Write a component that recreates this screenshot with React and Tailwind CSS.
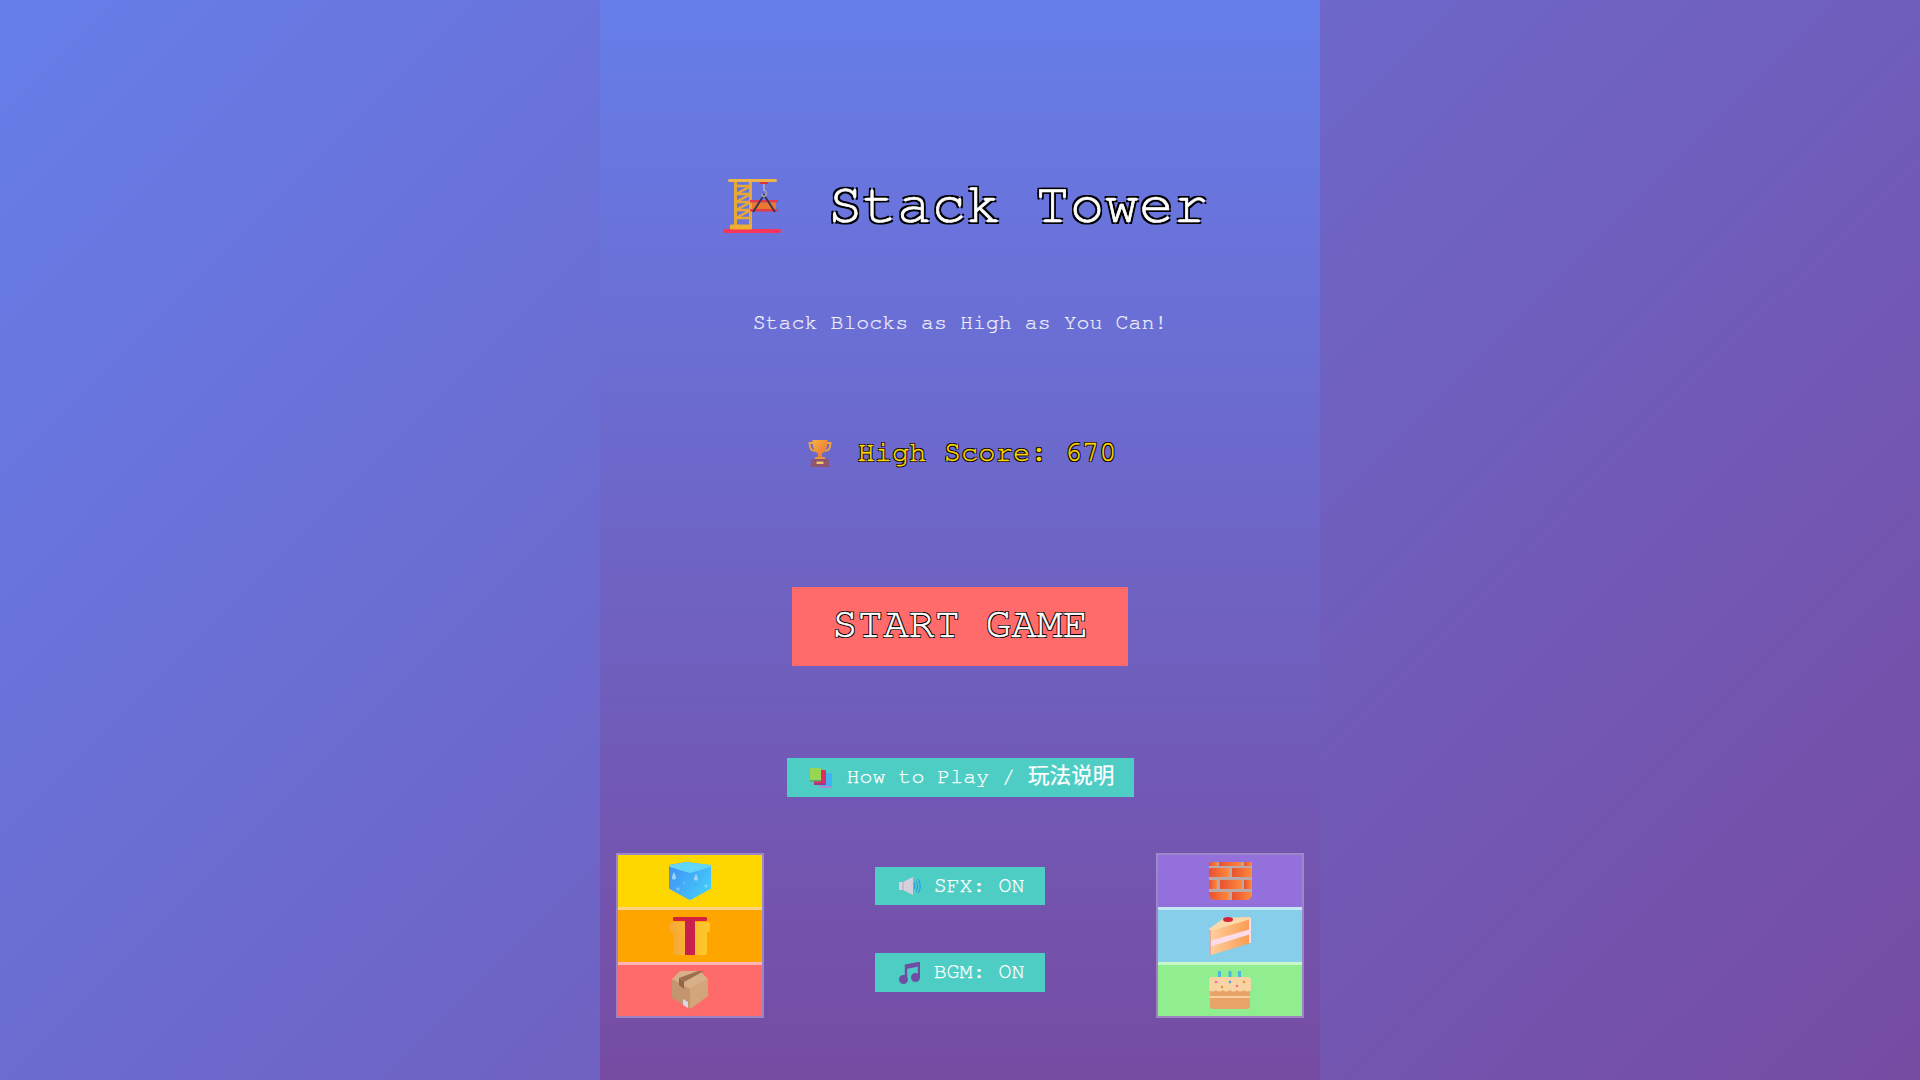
const Crane = () => (
  <svg width="58" height="54" viewBox="0 0 58 54" className="shrink-0">
    <rect x="0" y="50" width="58" height="4" rx="2" fill="#f5355b" />
    <rect x="7" y="45.500" width="22" height="5" rx="1" fill="#eeb02e" />
    <rect x="11" y="3" width="3" height="43" fill="#e8a838" />
    <rect x="26" y="3" width="3" height="43" fill="#e8a838" />
    <path d="M12 7h16L13 15l15 0L13 23l15 0L13 31l15 0L13 39l15 0" fill="none" stroke="#e8a838" strokeWidth="2.400" />
    <rect x="5" y="0" width="49" height="3" rx="1.500" fill="#eeb44a" />
    <rect x="37" y="3" width="8" height="2" fill="#d8333f" />
    <path d="M41 5v7" stroke="#b7b0c0" strokeWidth="1.500" />
    <rect x="27" y="21" width="28" height="2.500" fill="#e8394a" />
    <rect x="29" y="23.500" width="24" height="7" fill="#e8792f" />
    <rect x="27" y="30" width="28" height="2.500" fill="#e8394a" />
    <path d="M30 33l11-17 11 17" fill="none" stroke="#3a3550" strokeWidth="2" />
    <path d="M41 11c3 1 3 5 1 6s-3 0-3-2" fill="none" stroke="#a9a3b3" strokeWidth="1.500" />
  </svg>
);

const Trophy = () => (
  <svg width="24" height="27" viewBox="0 0 24 27" className="shrink-0">
    <defs>
      <linearGradient id="cupFill" x1="0" y1="0" x2="1" y2="1">
        <stop offset="0" stopColor="#f6b23c" />
        <stop offset="1" stopColor="#e8703a" />
      </linearGradient>
    </defs>
    <path d="M5 3H1.500c0 5 2 8 6 8M19 3h3.500c0 5-2 8-6 8" fill="none" stroke="#f0a53a" strokeWidth="1.800" />
    <path d="M4.500 0h15c0 8-2 11.500-5.500 13.500V17h-4v-3.500C6.500 11.500 4.500 8 4.500 0z" fill="url(#cupFill)" />
    <path d="M7.500 17h9l1 2.500h-11z" fill="#e89a3a" />
    <path d="M3.500 19h17l1 8h-19z" fill="#8f5570" />
    <rect x="8.500" y="21.500" width="7" height="2.500" rx="0.500" fill="#eec36a" />
  </svg>
);

const Books = () => (
  <svg width="22" height="20" viewBox="0 0 22 20" className="shrink-0">
    <rect x="10" y="5" width="12" height="14" rx="1" fill="#3fb4f5" />
    <rect x="10" y="18" width="12" height="2" fill="#b08ad0" />
    <rect x="4" y="2" width="12" height="15" rx="1" fill="#e02d5f" />
    <rect x="4" y="15" width="11" height="2" fill="#a03a80" />
    <rect x="0" y="0" width="11" height="13" rx="0.500" fill="#96d652" />
    <rect x="0" y="12" width="11" height="1.500" fill="#5fa070" />
  </svg>
);

const Speaker = () => (
  <svg width="22" height="18" viewBox="0 0 22 18" className="shrink-0">
    <path d="M0 5h4l10-5v18L4 13H0z" fill="#d6d0dc" />
    <rect x="3.500" y="5" width="1.500" height="8" fill="#bdb6c4" />
    <path d="M15 6c1.300 2 1.300 4 0 6M17 4c2 3 2 7 0 10M19 2c3 4 3 10 0 14" fill="none" stroke="#2f9ce8" strokeWidth="1.200" />
  </svg>
);

const Note = () => (
  <svg width="21" height="22" viewBox="0 0 21 22" className="shrink-0">
    <path d="M7 18V3.500L20 1v15" fill="none" stroke="#6f4fa3" strokeWidth="2.400" />
    <path d="M7 3L20 0.500v4L7 7z" fill="#6f4fa3" />
    <circle cx="4.500" cy="17.500" r="4.500" fill="#6f4fa3" />
    <circle cx="16.500" cy="15.500" r="4.500" fill="#6f4fa3" />
  </svg>
);

const IceCube = () => (
  <svg width="44" height="38" viewBox="0 0 44 38">
    <defs>
      <linearGradient id="iceFill" x1="0" y1="0" x2="1" y2="0.600">
        <stop offset="0" stopColor="#3f8ff5" />
        <stop offset="1" stopColor="#45c8fa" />
      </linearGradient>
    </defs>
    <path d="M2 4l16-3 24 3v22L22 37 2 26z" fill="url(#iceFill)" stroke="url(#iceFill)" strokeWidth="2" strokeLinejoin="round" />
    <path d="M2 4l16-3 24 3-20 6z" fill="#62d6f6" stroke="#62d6f6" strokeWidth="2" strokeLinejoin="round" />
    <path d="M4 16c0-2 2-6 2-6s2 4 2 6-4 2-4 0zM26 17c0-2 2-5 2-5s2 3 2 5-4 2-4 0z" fill="#9fd4f2" />
    <circle cx="16" cy="21" r="1.500" fill="#6fb4f5" />
    <circle cx="10" cy="27" r="1.800" fill="#7fc0f5" />
    <circle cx="38" cy="24" r="1.500" fill="#86dcf8" />
  </svg>
);

const Gift = () => (
  <svg width="40" height="38" viewBox="0 0 40 38">
    <defs>
      <linearGradient id="giftFill" x1="0" y1="0" x2="1" y2="0">
        <stop offset="0" stopColor="#f5a838" />
        <stop offset="1" stopColor="#fdc92a" />
      </linearGradient>
    </defs>
    <rect x="3" y="14" width="34" height="24" rx="2" fill="url(#giftFill)" />
    <rect x="0" y="5" width="40" height="10" rx="1.500" fill="url(#giftFill)" />
    <rect x="3" y="0" width="34" height="4" rx="1" fill="#d8213f" />
    <rect x="15" y="2" width="10" height="36" fill="#c9204e" />
  </svg>
);

const Box = () => (
  <svg width="36" height="38" viewBox="0 0 36 38">
    <path d="M0 8l18 10v20L0 27z" fill="#c49670" />
    <path d="M36 8L18 18v20l18-13z" fill="#d2a67a" />
    <path d="M0 8L8 0h20l8 8-18 10z" fill="#d8b088" />
    <path d="M7 7L26 0h6L12 11z" fill="#9c6f50" />
    <path d="M7 7l5 4v7l-5-4z" fill="#8f6548" />
    <path d="M11 28l5 3v6l-5-3z" fill="#d9d6e6" />
  </svg>
);

const Bricks = () => (
  <svg width="43" height="38" viewBox="0 0 43 38">
    <defs>
      <linearGradient id="brickFill" x1="0" y1="0" x2="1" y2="0">
        <stop offset="0" stopColor="#e8502f" />
        <stop offset="1" stopColor="#ff8a3c" />
      </linearGradient>
      <clipPath id="brickClip"><path d="M0 0h43v32a6 6 0 0 1-6 6H6a6 6 0 0 1-6-6z" /></clipPath>
    </defs>
    <g clipPath="url(#brickClip)">
      <rect width="43" height="38" fill="#b9a9a9" />
      <g fill="url(#brickFill)">
        <rect x="0" y="0" width="9" height="4" /><rect x="10" y="0" width="23" height="4" /><rect x="35" y="0" width="8" height="4" />
        <rect x="0" y="6" width="20" height="9" rx="1" /><rect x="23" y="6" width="20" height="9" rx="1" />
        <rect x="0" y="18" width="8" height="9" rx="1" /><rect x="11" y="18" width="22" height="9" rx="1" /><rect x="35" y="18" width="8" height="9" rx="1" />
        <rect x="0" y="30" width="20" height="8" rx="1" /><rect x="23" y="30" width="20" height="8" rx="1" />
      </g>
    </g>
  </svg>
);

const CakeSlice = () => (
  <svg width="42" height="38" viewBox="0 0 42 38">
    <defs>
      <linearGradient id="sliceFill" x1="0" y1="0" x2="1" y2="0">
        <stop offset="0" stopColor="#ffd0a0" />
        <stop offset="1" stopColor="#f99a50" />
      </linearGradient>
    </defs>
    <path d="M0 12L15 2 40 0q2 0 2 2v24L2 38q-2 0-2-2z" fill="url(#sliceFill)" />
    <path d="M0 12L15 1 40 0q2 0 2 2L2 14z" fill="#fbd9a8" />
    <path d="M0 24l42-12v5L0 30z" fill="#fcdce8" />
    <ellipse cx="19" cy="2.500" rx="5" ry="2.500" fill="#d8243a" />
    <rect x="0" y="13" width="2" height="25" fill="#e8a8a0" />
    <rect x="40" y="2" width="2" height="24" fill="#fcdce8" />
  </svg>
);

const Cake = () => (
  <svg width="42" height="38" viewBox="0 0 42 38">
    <rect x="9" y="0" width="3" height="6" fill="#4fb8d8" />
    <rect x="19.500" y="0" width="3" height="6" fill="#4fb8d8" />
    <rect x="29" y="0" width="3" height="6" fill="#4fb8d8" />
    <rect x="1" y="18" width="40" height="20" rx="3" fill="#e8a468" />
    <rect x="1" y="25" width="40" height="2" fill="#f8cfa0" />
    <path d="M0 9q0-3 3-3h36q3 0 3 3v10q-3.500 3-7 0-3.500 3-7 0-3.500 3-7 0-3.500 3-7 0-3.500 3-7 0-3.500 3-7 0z" fill="#f8d4a4" />
    <circle cx="7" cy="11" r="1.300" fill="#ec6fa0" /><circle cx="13" cy="16" r="1.300" fill="#e8943a" />
    <circle cx="21" cy="11" r="1.300" fill="#4f9fe0" /><circle cx="28" cy="15" r="1.300" fill="#ec6fa0" />
    <circle cx="35" cy="11" r="1.300" fill="#e8943a" />
  </svg>
);

const MenuButton = ({ className = '', children }) => (
  <button className={`flex items-center justify-center bg-[#4ecdc4] text-white text-[21.600px] [-webkit-text-stroke:0.25px_#fff] ${className}`}>
    {children}
  </button>
);

const BlockStack = ({ blocks }) => (
  <div className="w-[148px] border-2 border-white/30 flex flex-col">
    {blocks.map(({ color, Icon }, i) => (
      <div key={i} className={`flex items-center justify-center ${i === 0 ? 'h-[52px]' : 'h-[54.500px] border-t-[3px] border-white/50'} ${color}`}>
        <Icon />
      </div>
    ))}
  </div>
);

const leftBlocks = [
  { color: 'bg-[#ffd700]', Icon: IceCube },
  { color: 'bg-[#ffa500]', Icon: Gift },
  { color: 'bg-[#ff6b6b]', Icon: Box },
];

const rightBlocks = [
  { color: 'bg-[#9370db]', Icon: Bricks },
  { color: 'bg-[#87ceeb]', Icon: CakeSlice },
  { color: 'bg-[#90ee90]', Icon: Cake },
];

export default function App() {
  return (
    <div className="h-screen w-full overflow-hidden flex justify-center bg-[linear-gradient(135deg,#667eea_0%,#764ba2_100%)] font-['FreeMono','Liberation_Mono','Noto_Sans_CJK_SC',monospace]">
      <div className="w-[720px] h-full flex flex-col items-center bg-[linear-gradient(180deg,#667eea_0%,#764ba2_100%)]">
        {/* Title */}
        <h1 className="mt-[174px] h-[64px] flex items-center gap-[47px] pl-[11px] text-white text-[57.600px] leading-none font-normal [-webkit-text-stroke:0.7px_#fff] [text-shadow:2px_2px_0_#000,-2px_-2px_0_#000,2px_-2px_0_#000,-2px_2px_0_#000]">
          <Crane />
          <span>Stack Tower</span>
        </h1>
        <p className="mt-[73px] h-[24px] text-[21.600px] leading-[24px] text-white/85 [-webkit-text-stroke:0.2px_#fff]">Stack Blocks as High as You Can!</p>

        {/* High score */}
        <div className="mt-[101px] h-[34px] flex items-center gap-[25px] pl-[5px] text-[28.800px] text-[#ffd700] [-webkit-text-stroke:0.4px_#ffd700] [text-shadow:1px_1px_0_#000,-1px_-1px_0_#000,1px_-1px_0_#000,-1px_1px_0_#000]">
          <Trophy />
          <span>High Score: 670</span>
        </div>

        <button className="mt-[117px] w-[336px] h-[79px] pb-[3px] bg-[#ff6b6b] text-white text-[42.700px] [-webkit-text-stroke:0.5px_#fff] [text-shadow:1px_1px_0_#000,-1px_-1px_0_#000,1px_-1px_0_#000,-1px_1px_0_#000]">
          START GAME
        </button>

        <MenuButton className="mt-[92px] w-[347px] h-[39px] gap-[15px] pl-[4px]">
          <Books />
          <span>How to Play / 玩法说明</span>
        </MenuButton>

        {/* Bottom row */}
        <div className="mt-[56px] w-full px-[16px] flex justify-between items-start">
          <BlockStack blocks={leftBlocks} />
          <div className="flex flex-col gap-[48px] pt-[14px]">
            <MenuButton className="w-[170px] h-[38px] gap-[13px] pl-[3px]">
              <Speaker />
              <span>SFX: ON</span>
            </MenuButton>
            <MenuButton className="w-[170px] h-[39px] gap-[14px] pl-[3px]">
              <Note />
              <span>BGM: ON</span>
            </MenuButton>
          </div>
          <BlockStack blocks={rightBlocks} />
        </div>
      </div>
    </div>
  );
}
